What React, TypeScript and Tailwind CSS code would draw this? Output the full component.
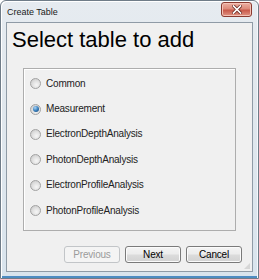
import React from "react";

const options = [
  "Common",
  "Measurement",
  "ElectronDepthAnalysis",
  "PhotonDepthAnalysis",
  "ElectronProfileAnalysis",
  "PhotonProfileAnalysis",
];

function Radio({ checked }: { checked: boolean }) {
  return (
    <span className="w-[11px] h-[11px] rounded-full border border-[#a2a2a2] bg-[radial-gradient(circle_at_60%_65%,#f6f6f6_0%,#e2e2e2_45%,#c4c4c4_100%)] flex items-center justify-center shrink-0">
      {checked && (
        <span className="w-[6px] h-[6px] rounded-full bg-[radial-gradient(circle_at_35%_30%,#a9d4f7_0%,#3a80bd_50%,#123f6c_100%)]" />
      )}
    </span>
  );
}

function Btn({ label, disabled }: { label: string; disabled?: boolean }) {
  return (
    <div
      className={
        disabled
          ? "w-[56px] h-[17px] rounded-[3px] border border-[#c2c5c8] bg-[#f4f4f4] flex items-center justify-center text-[10px] text-[#9b9b9b] tracking-[-0.2px]"
          : "w-[56px] h-[17px] rounded-[3px] border border-[#7a7a7a] bg-[linear-gradient(#f4f4f4_0%,#ececec_48%,#dcdcdc_52%,#d2d2d2_100%)] shadow-[inset_0_0_0_1px_#fbfbfb] flex items-center justify-center text-[10px] text-black tracking-[-0.2px]"
      }
    >
      {label}
    </div>
  );
}

export default function App() {
  return (
    <div
      className="w-[259px] h-[279px] flex flex-col px-[5px] pb-[6px] border border-[#6f7c88] rounded-t-[6px] bg-[linear-gradient(180deg,#e6ebf0_0%,#e0e7ed_40%,#d9e4ed_100%)] shadow-[inset_1px_1px_0_#ffffff,inset_-1px_0_0_#f4f8fb,inset_0_-2px_0_#4d8cc2]"
      style={{ fontFamily: '"Liberation Sans", Arial, sans-serif' }}
    >
      <div className="h-[21px] flex items-start justify-between shrink-0">
        <span className="pt-[6px] pl-[1px] text-[9px] leading-[11px] text-[#1a1a1a]">Create Table</span>
        <div className="mt-[1px] mr-[1px] w-[31px] h-[15px] rounded-[3px] border border-[#8b3a30] bg-[linear-gradient(180deg,#eeb0a3_0%,#dc8a7a_45%,#c9594a_55%,#e09484_100%)] shadow-[inset_0_0_0_1px_#f3c2b6] flex items-center justify-center">
          <svg width="10" height="9" viewBox="0 0 10 9">
            <path d="M1.5 1 L8.5 8 M8.5 1 L1.5 8" stroke="#6a2a22" strokeWidth="3.2" strokeLinecap="square" />
            <path d="M1.5 1 L8.5 8 M8.5 1 L1.5 8" stroke="#ffffff" strokeWidth="1.7" strokeLinecap="square" />
          </svg>
        </div>
      </div>
      <div className="flex-1 relative bg-[#f0f0f0] border border-[#8f9ba6] flex flex-col">
        <div className="pt-[6px] pl-[5px] text-[22px] leading-[22px] text-black">Select table to add</div>
        <div className="mt-[17px] mx-[16px] h-[163px] border border-[#adadad] shadow-[inset_1px_1px_0_#ffffff] flex flex-col pt-[2px] pl-[6px]">
          {options.map((o, i) => (
            <div key={o} className="h-[25.4px] flex items-center gap-[5px]">
              <Radio checked={i === 1} />
              <span className="text-[10px] leading-[12px] tracking-[-0.2px] text-[#222222]">{o}</span>
            </div>
          ))}
        </div>
        <div className="mt-[15px] pr-[10px] flex justify-end gap-[5px]">
          <Btn label="Previous" disabled />
          <Btn label="Next" />
          <Btn label="Cancel" />
        </div>
        <div className="absolute right-[2px] bottom-[2px] w-[6px] h-[6px] bg-[radial-gradient(circle,#b8b8b8_0.6px,transparent_0.8px)] bg-[length:2px_2px] [clip-path:polygon(100%_0,100%_100%,0_100%)]" />
      </div>
    </div>
  );
}
